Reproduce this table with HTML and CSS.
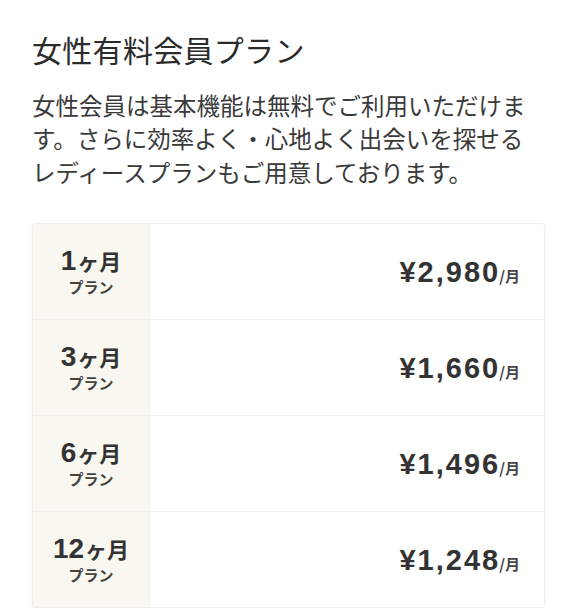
FILE: index.html
```html
<!DOCTYPE html>
<html lang="ja">
<head>
<meta charset="utf-8">
<link rel="stylesheet" href="styles.css">
</head>
<body>
<main class="page">
  <h1 class="title">女性有料会員プラン</h1>
  <p class="lead">女性会員は基本機能は無料でご利用いただけます。さらに効率よく・心地よく出会いを探せるレディースプランもご用意しております。</p>
  <div class="plans">
    <div class="plan">
      <div class="plan-name"><span class="months"><span class="num">1</span>ヶ月</span><span class="sub">プラン</span></div>
      <div class="plan-price"><span class="amount">¥2,980</span><span class="unit">/月</span></div>
    </div>
    <div class="plan">
      <div class="plan-name"><span class="months"><span class="num">3</span>ヶ月</span><span class="sub">プラン</span></div>
      <div class="plan-price"><span class="amount">¥1,660</span><span class="unit">/月</span></div>
    </div>
    <div class="plan">
      <div class="plan-name"><span class="months"><span class="num">6</span>ヶ月</span><span class="sub">プラン</span></div>
      <div class="plan-price"><span class="amount">¥1,496</span><span class="unit">/月</span></div>
    </div>
    <div class="plan">
      <div class="plan-name"><span class="months"><span class="num">12</span>ヶ月</span><span class="sub">プラン</span></div>
      <div class="plan-price"><span class="amount">¥1,248</span><span class="unit">/月</span></div>
    </div>
  </div>
</main>
</body>
</html>
```

FILE: styles.css
```css
html, body {
  margin: 0;
  padding: 0;
  background: #ffffff;
}

.page {
  width: 513px;
  padding: 31px 0 0 32px;
  font-family: "Noto Sans CJK JP", "Noto Sans", sans-serif;
  color: #333333;
}

.title {
  margin: 0;
  font-size: 30px;
  line-height: 36px;
  font-weight: 400;
  color: #2b2b2b;
  letter-spacing: 0.3px;
}

.lead {
  margin: 22px 0 0;
  font-size: 23.5px;
  line-height: 33.3px;
  color: #3a3a3a;
}

.plans {
  margin-top: 34px;
  border: 1px solid #eeeeee;
  border-radius: 3px;
  box-shadow: 0 0 2px rgba(0,0,0,0.05);
  display: flex;
  flex-direction: column;
  overflow: hidden;
}

.plan {
  display: grid;
  grid-template-columns: 117px 1fr;
  height: 95px;
  border-top: 1px solid #efefef;
}

.plan:first-child {
  border-top: none;
}

.plan-name {
  background: #f8f7f0;
  border-right: 1px solid #f2f1ea;
  display: flex;
  flex-direction: column;
  align-items: center;
  justify-content: center;
  gap: 1px;
  color: #333333;
  font-weight: 700;
  padding-top: 2px;
}

.months {
  font-size: 22px;
  line-height: 26px;
  display: flex;
  align-items: baseline;
}

.num {
  font-family: "Liberation Sans", Arial, sans-serif;
  font-size: 28px;
  line-height: 26px;
  font-weight: 700;
  margin-right: 1px;
}

.sub {
  font-size: 15px;
  line-height: 23px;
  color: #444444;
}

.plan-price {
  display: flex;
  align-items: baseline;
  justify-content: flex-end;
  align-self: center;
  padding-right: 24px;
  padding-top: 2px;
  color: #333333;
}

.amount {
  font-family: "Liberation Sans", Arial, sans-serif;
  font-weight: 700;
  font-size: 29px;
  letter-spacing: 2px;
  line-height: 32px;
}

.unit {
  font-size: 15px;
  font-weight: 700;
  color: #444444;
  margin-left: -1px;
}
```
